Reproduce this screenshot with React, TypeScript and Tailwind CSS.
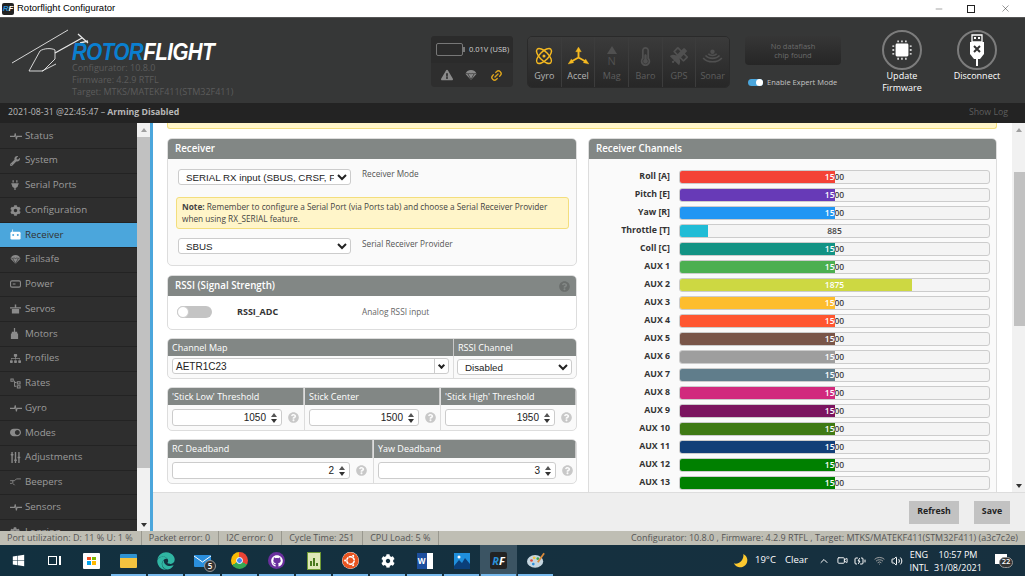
import type { ReactElement, ReactNode } from "react";
import { Atom, BatteryCharging, ChevronUp, Link2, Minus, Video, Volume2, Wifi, X } from "lucide-react";
import {
    FaCog,
    FaEdge,
    FaExclamationTriangle,
    FaGithub,
    FaPlug,
    FaQuestionCircle,
    FaSatellite,
    FaSitemap,
    FaSlidersH,
    FaThermometerHalf,
    FaToggleOn,
    FaUbuntu,
    FaWindows,
    FaWrench,
} from "react-icons/fa";

const font = "font-['Open_Sans','Noto_Sans',sans-serif]";

function Parachute({ className }: { className: string }): ReactElement {
    return (
        <svg viewBox="0 0 24 24" className={className} fill="currentColor">
            <path d="M1 10C2 5 7 2 12 2s10 3 11 8l-11 12z" />
            <path d="M6 10l6 11 6-11" stroke="#2d2d2d" strokeWidth="1.4" fill="none" />
            <path d="M1 10c2-1.500 3.500-1.500 5 0 2-1.500 4-1.500 6 0 2-1.500 4-1.500 6 0 1.500-1.500 3-1.500 5 0" stroke="#2d2d2d" strokeWidth="1.4" fill="none" />
        </svg>
    );
}

function Pulse(): ReactElement {
    return (
        <svg viewBox="0 0 16 12" className="w-[12px] h-[10px]" fill="none" stroke="currentColor" strokeWidth="1.400">
            <path d="M0 6.500h6l1-4 1.500 8 1-4H16" />
        </svg>
    );
}

function RadioIcon(): ReactElement {
    return (
        <svg viewBox="0 0 12 12" className="w-[11px] h-[11px]" fill="white">
            <path d="M2.500 0.500h.8v3h-.8z" />
            <rect x="0.500" y="3" width="11" height="8.500" rx="1.500" />
            <circle cx="3.500" cy="6.500" r="1.100" fill="#4ba6dc" />
            <circle cx="8.500" cy="6.500" r="1.100" fill="#4ba6dc" />
        </svg>
    );
}

const navItems: { label: string; icon: ReactNode }[] = [
    { label: "Status", icon: <Pulse /> },
    { label: "System", icon: <FaWrench size={10} /> },
    { label: "Serial Ports", icon: <FaPlug size={10} /> },
    { label: "Configuration", icon: <FaCog size={11} /> },
    { label: "Receiver", icon: <RadioIcon /> },
    { label: "Failsafe", icon: <Parachute className="w-[11px] h-[11px]" /> },
    {
        label: "Power",
        icon: (
            <svg viewBox="0 0 12 8" className="w-[11px] h-[8px]" fill="none" stroke="currentColor" strokeWidth="1.200">
                <rect x="0.600" y="0.600" width="10.800" height="6.800" rx="1.500" />
                <path d="M3 4h3" />
            </svg>
        ),
    },
    {
        label: "Servos",
        icon: (
            <svg viewBox="0 0 12 11" className="w-[11px] h-[10px]" fill="currentColor">
                <path d="M0 3.500h12v1.500H0zM2 5.500h8v5H2zM5.200 0.500h1.600v3H5.200z" />
            </svg>
        ),
    },
    {
        label: "Motors",
        icon: (
            <svg viewBox="0 0 10 12" className="w-[9px] h-[11px]" fill="currentColor">
                <path d="M4.300 0h1.400v4H4.300zM2 4h6v2H2zM1 6h8v6H1z" />
            </svg>
        ),
    },
    { label: "Profiles", icon: <FaSitemap size={11} /> },
    {
        label: "Rates",
        icon: (
            <svg viewBox="0 0 12 12" className="w-[11px] h-[11px]" fill="none" stroke="currentColor" strokeWidth="1.100">
                <path d="M1 1h2.500v2.500H1zM5 3v6h2M5 5h2M8 4h3v2.500H8zM8 8.500h3V11H8z" />
            </svg>
        ),
    },
    { label: "Gyro", icon: <Pulse /> },
    { label: "Modes", icon: <FaToggleOn size={11} /> },
    { label: "Adjustments", icon: <FaSlidersH size={11} className="rotate-90" /> },
    {
        label: "Beepers",
        icon: (
            <svg viewBox="0 0 12 10" className="w-[11px] h-[9px]" fill="none" stroke="currentColor" strokeWidth="1">
                <path d="M0 3h5l2-2h5M3 3v3l2 2M0 6h2" />
            </svg>
        ),
    },
    { label: "Sensors", icon: <Pulse /> },
    { label: "Logging", icon: <FaCog size={10} /> },
];

const channels: { name: string; value: number; color: string }[] = [
    { name: "Roll [A]", value: 1500, color: "bg-[#f44336]" },
    { name: "Pitch [E]", value: 1500, color: "bg-[#673ab7]" },
    { name: "Yaw [R]", value: 1500, color: "bg-[#2196f3]" },
    { name: "Throttle [T]", value: 885, color: "bg-[#20bcd6]" },
    { name: "Coll [C]", value: 1500, color: "bg-[#129384]" },
    { name: "AUX 1", value: 1500, color: "bg-[#4caf50]" },
    { name: "AUX 2", value: 1875, color: "bg-[#cdd842]" },
    { name: "AUX 3", value: 1500, color: "bg-[#fdbd2d]" },
    { name: "AUX 4", value: 1500, color: "bg-[#ff5630]" },
    { name: "AUX 5", value: 1500, color: "bg-[#795548]" },
    { name: "AUX 6", value: 1500, color: "bg-[#9e9e9e]" },
    { name: "AUX 7", value: 1500, color: "bg-[#607d8b]" },
    { name: "AUX 8", value: 1500, color: "bg-[#d12a7d]" },
    { name: "AUX 9", value: 1500, color: "bg-[#7b145f]" },
    { name: "AUX 10", value: 1500, color: "bg-[#3f7a14]" },
    { name: "AUX 11", value: 1500, color: "bg-[#123f78]" },
    { name: "AUX 12", value: 1500, color: "bg-[#008000]" },
    { name: "AUX 13", value: 1500, color: "bg-[#008000]" },
];

function TitleBar(): ReactElement {
    return (
        <div className="h-[17px] bg-white flex items-center font-['Liberation_Sans',sans-serif]">
            <div className="ml-[2px] w-[12px] h-[12px] bg-[#222] rounded-[2px] flex items-center justify-center text-[8px] leading-none font-bold italic text-white">
                <span className="text-[#2a8fd8]">R</span>F
            </div>
            <span className="ml-[3px] text-[9.500px] text-black">Rotorflight Configurator</span>
            <div className="ml-auto flex items-center text-[#222]">
                <Minus size={10} strokeWidth={1} className="mr-[23px]" />
                <div className="w-[8px] h-[8px] border border-[#222] mr-[25px]" />
                <X size={11} strokeWidth={1} className="mr-[14px]" />
            </div>
        </div>
    );
}

function Logo(): ReactElement {
    return (
        <div className="relative w-[431px] pl-[72px] pt-[24px]">
            <svg viewBox="0 0 100 80" className="absolute left-0 top-0 w-[100px] h-[80px]" fill="none" stroke="#e8e8e8" strokeWidth="0.900">
                <path d="M12 45L68 12" />
                <path d="M55 35L82 20M78 16L88 25M80 25L88 23" strokeWidth="1.300" />
                <path d="M29 53L40 33C44 30 52 30 55 32L55 41L43 53z" />
                <path d="M42 53L56 46" />
            </svg>
            <div className="h-[20px] text-[20.500px] leading-[20px] font-black italic font-['Liberation_Sans',sans-serif] tracking-[-0.500px] scale-y-[1.150]">
                <span className="text-[#0a7fd0]">ROTOR</span>
                <span className="text-white">FLIGHT</span>
            </div>
            <div className="text-[9px] leading-[12px] text-[#5c5c5c]">
                <div>Configurator: 10.8.0</div>
                <div>Firmware: 4.2.9 RTFL</div>
                <div>Target: MTKS/MATEKF411(STM32F411)</div>
            </div>
        </div>
    );
}

function BatteryPanel(): ReactElement {
    return (
        <div className="w-[82px] h-[51px] mt-[18px] rounded-[4px] bg-[#2e2e2e] flex flex-col">
            <div className="h-[27px] flex items-center pl-[5px] bg-[#2b2b2b] rounded-t-[4px]">
                <div className="w-[27px] h-[13px] border border-[#777] rounded-[2px]" />
                <div className="w-[2px] h-[5px] bg-[#777]" />
                <span className="ml-[4px] text-[7.500px] text-[#d0d0d0]">0.01V (USB)</span>
            </div>
            <div className="flex-1 flex items-center justify-around px-[4px] text-[#8a8a8a]">
                <FaExclamationTriangle size={12} />
                <Parachute className="w-[12px] h-[12px]" />
                <Link2 size={13} strokeWidth={2.500} className="text-[#d9a11c] -rotate-45" />
            </div>
        </div>
    );
}

function SensorCell({ label, active, children }: { label: string; active?: boolean; children: ReactNode }): ReactElement {
    return (
        <div className={`flex-1 flex flex-col items-center border-r border-[#3c3c3c] last:border-r-0 bg-gradient-to-b from-[#3b3b3b] to-[#272727] ${active ? "text-[#f5b921]" : "text-[#505050]"}`}>
            <div className="h-[28px] mt-[5px] flex items-center justify-center">{children}</div>
            <span className={`text-[9px] leading-[12px] ${active ? "text-[#b4b4b4]" : "text-[#5e5e5e]"}`}>{label}</span>
        </div>
    );
}

function SensorPanel(): ReactElement {
    return (
        <div className="w-[203px] h-[52px] ml-[14px] mt-[18px] rounded-[5px] overflow-hidden flex border border-[#2a2a2a]">
            <SensorCell label="Gyro" active>
                <Atom size={20} strokeWidth={1.700} />
            </SensorCell>
            <SensorCell label="Accel" active>
                <svg viewBox="0 0 22 20" className="w-[21px] h-[19px]" fill="currentColor" stroke="currentColor">
                    <path d="M11 11V4M11 11L4 15M11 11l7 4" strokeWidth="2" fill="none" />
                    <path d="M11 0l3 5H8zM0 18l3.500-5.500 2.500 4zM22 18l-3.500-5.500-2.500 4z" strokeWidth="0.300" />
                </svg>
            </SensorCell>
            <SensorCell label="Mag">
                <div className="flex flex-col items-center leading-none">
                    <div className="w-0 h-0 border-x-[5px] border-x-transparent border-b-[8px] border-b-current" />
                    <span className="text-[11px] leading-[13px]">N</span>
                </div>
            </SensorCell>
            <SensorCell label="Baro">
                <FaThermometerHalf size={19} />
            </SensorCell>
            <SensorCell label="GPS">
                <FaSatellite size={18} />
            </SensorCell>
            <SensorCell label="Sonar">
                <svg viewBox="0 0 22 16" className="w-[21px] h-[15px]" fill="none" stroke="currentColor" strokeWidth="1.700">
                    <circle cx="11" cy="3" r="1.500" fill="currentColor" />
                    <path d="M6.500 5c2 2.500 7 2.500 9 0M3.500 7c3.500 4 11.500 4 15 0M1 9.500c4.500 5.500 15.500 5.500 20 0" />
                </svg>
            </SensorCell>
        </div>
    );
}

function ExpertBlock(): ReactElement {
    return (
        <div className="w-[96px] ml-[15px] mt-[18px] flex flex-col">
            <div className="h-[29px] rounded-[4px] bg-gradient-to-b from-[#363636] to-[#262626] flex items-center justify-center text-center text-[7.500px] leading-[9px] text-[#6b6b6b]">
                No dataflash
                <br />
                chip found
            </div>
            <div className="mt-[12px] ml-[3px] flex items-center">
                <div className="w-[15px] h-[7px] rounded-full bg-[#4ba6dc] flex justify-end items-center">
                    <div className="w-[7px] h-[7px] rounded-full bg-white" />
                </div>
                <span className="ml-[4px] text-[7.500px] text-[#c4c4c4] whitespace-nowrap">Enable Expert Mode</span>
            </div>
        </div>
    );
}

function CircleButton({ label, children, className }: { label: ReactNode; children: ReactNode; className: string }): ReactElement {
    return (
        <div className={`w-[60px] pt-[12px] flex flex-col items-center ${className}`}>
            <div className="w-[40px] h-[40px] rounded-full border-2 border-[#7c7c7c] flex items-center justify-center">{children}</div>
            <div className="text-center text-[9px] leading-[12px] text-white whitespace-nowrap">{label}</div>
        </div>
    );
}

function Header(): ReactElement {
    return (
        <div className={`h-[86px] bg-[#363737] border-t border-[#555] flex ${font}`}>
            <Logo />
            <BatteryPanel />
            <SensorPanel />
            <ExpertBlock />
            <CircleButton className="ml-[31px]" label={<>Update<br />Firmware</>}>
                <svg viewBox="0 0 24 24" className="w-[22px] h-[22px]" fill="white">
                    <rect x="5" y="5" width="14" height="14" rx="1.500" />
                    <path d="M7 1.500h1.500v2H7zM11.200 1.500h1.500v2h-1.500zM15.500 1.500H17v2h-1.500zM7 20.500h1.500v2H7zM11.200 20.500h1.500v2h-1.500zM15.500 20.500H17v2h-1.500zM1.500 7h2v1.500h-2zM1.500 11.200h2v1.500h-2zM1.500 15.500h2V17h-2zM20.500 7h2v1.500h-2zM20.500 11.200h2v1.500h-2zM20.500 15.500h2V17h-2z" />
                </svg>
            </CircleButton>
            <CircleButton className="ml-[15px]" label="Disconnect">
                <svg viewBox="0 0 20 34" className="w-[20px] h-[34px]" fill="white">
                    <path d="M5 2h10v7H5z" fill="none" stroke="white" strokeWidth="1.300" />
                    <path d="M7 4h2v2H7zM11 4h2v2h-2z" />
                    <path d="M3 9h14v12l-4 5H7l-4-5z" />
                    <path d="M9 26h2v7H9z" />
                    <path d="M7 13l6 6M13 13l-6 6" stroke="#333" strokeWidth="2" />
                </svg>
            </CircleButton>
        </div>
    );
}

function LogBar(): ReactElement {
    return (
        <div className={`h-[20px] bg-[#232323] flex items-center justify-between pl-[8px] pr-[17px] text-[8.750px] ${font}`}>
            <span className="text-[#b8b8b8]">
                2021-08-31 @22:45:47 – <b>Arming Disabled</b>
            </span>
            <span className="text-[#5e5e5e]">Show Log</span>
        </div>
    );
}

function Sidebar(): ReactElement {
    return (
        <div className={`w-[137px] pt-[1px] bg-[#2e2e2e] overflow-hidden ${font}`}>
            {navItems.map((item) => (
                <div
                    key={item.label}
                    className={`h-[24.750px] flex items-center border-b border-[#232323] shrink-0 ${item.label === "Receiver" ? "bg-[#4ba6dc] text-[#333]" : "text-[#9c9c9c]"}`}
                >
                    <div className={`w-[25px] pl-[10px] flex ${item.label === "Receiver" ? "text-white" : "text-[#8a8a8a]"}`}>{item.icon}</div>
                    <span className="text-[9.750px]">{item.label}</span>
                </div>
            ))}
        </div>
    );
}

function ScrollBar({ thumbTop, thumbHeight, className }: { thumbTop: string; thumbHeight: string; className: string }): ReactElement {
    return (
        <div className={`bg-[#f1f1f1] flex flex-col shrink-0 ${className}`}>
            <div className="h-[14px] flex items-center justify-center">
                <div className="w-0 h-0 border-x-[3px] border-x-transparent border-b-[4px] border-b-[#a0a0a0]" />
            </div>
            <div className={`bg-[#c1c1c1] ${thumbTop} ${thumbHeight}`} />
            <div className="mt-auto h-[13px] flex items-center justify-center">
                <div className="w-0 h-0 border-x-[3px] border-x-transparent border-t-[4px] border-t-[#333]" />
            </div>
        </div>
    );
}

function Help({ dark }: { dark?: boolean }): ReactElement {
    return <FaQuestionCircle size={11} className={dark ? "text-[#6a6e6c]" : "text-[#c8c8c8]"} />;
}

function NumberBox({ value, width }: { value: number; width: string }): ReactElement {
    return (
        <div className={`h-[17px] bg-white border border-[#ccc] rounded-[3px] flex items-center font-['Liberation_Sans',sans-serif] text-[10px] text-[#222] ${width}`}>
            <span className="flex-1 text-right">{value}</span>
            <div className="w-[15px] flex flex-col items-center gap-[2px]">
                <div className="w-0 h-0 border-x-[3px] border-x-transparent border-b-[4px] border-b-[#555]" />
                <div className="w-0 h-0 border-x-[3px] border-x-transparent border-t-[4px] border-t-[#333]" />
            </div>
        </div>
    );
}

function SelectBox({ value, className }: { value: string; className: string }): ReactElement {
    return (
        <select defaultValue={value} className={`h-[16px] pl-[3px] bg-white border border-[#ccc] rounded-[3px] font-['Liberation_Sans',sans-serif] text-[9.750px] text-[#222] ${className}`}>
            <option value={value}>{value}</option>
        </select>
    );
}

function PanelHead({ children, help }: { children: ReactNode; help?: boolean }): ReactElement {
    return (
        <div className="h-[20px] bg-[#828785] rounded-t-[4px] flex items-center justify-between pl-[7px] pr-[6px] text-[9.750px] font-semibold text-white">
            {children}
            {help && <Help dark />}
        </div>
    );
}

function GridHead({ children, className }: { children: ReactNode; className: string }): ReactElement {
    return (
        <div className={`bg-[#828785] flex items-center pl-[4px] text-[9px] font-medium text-white border-r border-[#c8c8c8] last:border-r-0 ${className}`}>{children}</div>
    );
}

function ReceiverPanel(): ReactElement {
    return (
        <div className="h-[128px] border border-[#ddd] rounded-[5px] bg-[#fafafa]">
            <PanelHead>Receiver</PanelHead>
            <div className="pl-[10px] pr-[7px] pt-[10px]">
                <div className="flex items-start">
                    <SelectBox value="SERIAL RX input (SBUS, CRSF, FPORT, SUMD)" className="w-[173px]" />
                    <span className="ml-[11px] -mt-[1px] text-[8.250px] text-[#555]">Receiver Mode</span>
                </div>
                <div className="mt-[12px] -ml-[2px] h-[32px] bg-[#fff5c9] border border-[#f3de7d] rounded-[3px] px-[5px] py-[3px] text-[8.250px] leading-[11.500px] text-[#444]">
                    <b>Note:</b> Remember to configure a Serial Port (via Ports tab) and choose a Serial Receiver Provider when using RX_SERIAL feature.
                </div>
                <div className="mt-[9px] flex items-start">
                    <SelectBox value="SBUS" className="w-[173px]" />
                    <span className="ml-[11px] text-[8.250px] text-[#555]">Serial Receiver Provider</span>
                </div>
            </div>
        </div>
    );
}

function RssiPanel(): ReactElement {
    return (
        <div className="h-[55px] mt-[9px] border border-[#ddd] rounded-[5px] bg-white">
            <PanelHead help>RSSI (Signal Strength)</PanelHead>
            <div className="flex items-center h-[33px] pl-[9px] pb-[1px]">
                <div className="w-[35px] h-[12px] rounded-full bg-[#c4c4c4] flex items-center">
                    <div className="w-[12px] h-[12px] rounded-full bg-white border border-[#ccc]" />
                </div>
                <span className="ml-[25px] w-[125px] text-[9px] font-bold text-[#333]">RSSI_ADC</span>
                <span className="text-[8.250px] text-[#666]">Analog RSSI input</span>
            </div>
        </div>
    );
}

function ChannelMapTable(): ReactElement {
    return (
        <div className="h-[41px] mt-[8px] border border-[#ddd] rounded-[5px] bg-[#fafafa] overflow-hidden">
            <div className="flex h-[17px]">
                <GridHead className="w-[286px]">Channel Map</GridHead>
                <GridHead className="flex-1">RSSI Channel</GridHead>
            </div>
            <div className="flex h-[23px]">
                <div className="w-[286px] pl-[4px] pt-[2px] border-r border-[#ddd]">
                    <div className="w-[277px] h-[16px] bg-white border border-[#ccc] rounded-[3px] flex items-center font-['Liberation_Sans',sans-serif] text-[10px] text-[#222]">
                        <span className="flex-1 pl-[3px]">AETR1C23</span>
                        <div className="w-[14px] h-full border-l border-[#ccc] flex items-center justify-center">
                            <div className="w-[5px] h-[5px] border-r-2 border-b-2 border-[#222] rotate-45 -mt-[2px]" />
                        </div>
                    </div>
                </div>
                <div className="flex-1 pl-[3px] pt-[3px] flex items-start">
                    <SelectBox value="Disabled" className="w-[115px]" />
                </div>
            </div>
        </div>
    );
}

function ThresholdTable(): ReactElement {
    const cells = [
        { label: "'Stick Low' Threshold", value: 1050, w: "w-[137px]" },
        { label: "Stick Center", value: 1500, w: "w-[136px]" },
        { label: "'Stick High' Threshold", value: 1950, w: "flex-1" },
    ];
    return (
        <div className="h-[44px] mt-[8px] border border-[#ddd] rounded-[5px] bg-[#fafafa] overflow-hidden flex">
            {cells.map((cell) => (
                <div key={cell.label} className={`${cell.w} border-r border-[#ddd] last:border-r-0 flex flex-col`}>
                    <GridHead className="h-[17px]">{cell.label}</GridHead>
                    <div className="flex-1 flex items-center pl-[4px]">
                        <NumberBox value={cell.value} width="w-[110px]" />
                        <div className="ml-[6px] flex"><Help /></div>
                    </div>
                </div>
            ))}
        </div>
    );
}

function DeadbandTable(): ReactElement {
    const cells = [
        { label: "RC Deadband", value: 2, w: "w-[206px]" },
        { label: "Yaw Deadband", value: 3, w: "flex-1" },
    ];
    return (
        <div className="h-[45px] mt-[8px] border border-[#ddd] rounded-[5px] bg-[#fafafa] overflow-hidden flex">
            {cells.map((cell) => (
                <div key={cell.label} className={`${cell.w} border-r border-[#ddd] last:border-r-0 flex flex-col`}>
                    <GridHead className="h-[18px]">{cell.label}</GridHead>
                    <div className="flex-1 flex items-center pl-[4px]">
                        <NumberBox value={cell.value} width="w-[178px]" />
                        <div className="ml-[6px] flex"><Help /></div>
                    </div>
                </div>
            ))}
        </div>
    );
}

function ChannelRow({ name, value, color }: { name: string; value: number; color: string }): ReactElement {
    return (
        <div className="h-[18px] flex items-center">
            <div className="w-[80px] text-right text-[8.750px] font-bold text-[#333]">{name}</div>
            <div className="relative ml-[9px] w-[311px] h-[14px] bg-[#f4f4f4] border border-[#ccc] rounded-[3px] overflow-hidden text-[8.500px] leading-[12px] font-semibold text-center text-[#444]">
                {value}
                {/* white copy of the value, clipped by the coloured fill */}
                <div className={`absolute left-0 top-0 h-full overflow-hidden ${color}`} style={{ width: `${(value - 750) / 15}%` }}>
                    <div className="w-[309px] text-white">{value}</div>
                </div>
            </div>
        </div>
    );
}

function ChannelsPanel(): ReactElement {
    return (
        <div className="h-[400px] border border-[#ddd] rounded-[5px] bg-[#fafafa]">
            <PanelHead>Receiver Channels</PanelHead>
            <div className="pt-[9px] pl-[1px]">
                {channels.map((channel) => (
                    <ChannelRow key={channel.name} {...channel} />
                ))}
            </div>
        </div>
    );
}

function Content(): ReactElement {
    return (
        <div className={`flex-1 min-w-0 flex flex-col ${font}`}>
            <div className="h-[369px] flex overflow-hidden">
                <div className="flex-1 min-w-0 bg-white pl-[14px] pr-[15px] overflow-hidden">
                    <div className="h-[6px] bg-[#fff5c9] border-b border-x border-[#f3de7d] rounded-b-[3px]" />
                    <div className="mt-[9px] flex gap-[11px]">
                        <div className="w-[410px]">
                            <ReceiverPanel />
                            <RssiPanel />
                            <ChannelMapTable />
                            <ThresholdTable />
                            <DeadbandTable />
                            <div className="h-[20px] mt-[8px] bg-[#828785] rounded-t-[4px]" />
                        </div>
                        <div className="flex-1 min-w-0">
                            <ChannelsPanel />
                        </div>
                    </div>
                </div>
                <ScrollBar className="w-[13px]" thumbTop="mt-[35px]" thumbHeight="h-[154px] ml-[2px]" />
            </div>
            <div className="h-[39px] bg-[#eeeeee] border-t border-[#ddd] flex items-center justify-end pr-[15px] gap-[15px]">
                <div className="h-[23px] w-[50px] bg-[#c2c2c2] flex items-center justify-center text-[8.750px] font-bold text-[#222]">Refresh</div>
                <div className="h-[23px] w-[36px] bg-[#c2c2c2] flex items-center justify-center text-[8.750px] font-bold text-[#222]">Save</div>
            </div>
        </div>
    );
}

function StatusBar(): ReactElement {
    const stats = ["Port utilization: D: 11 % U: 1 %", "Packet error: 0", "I2C error: 0", "Cycle Time: 251", "CPU Load: 5 %"];
    return (
        <div className={`h-[14px] bg-[#bfbeb4] flex items-center text-[9px] text-[#555] ${font}`}>
            {stats.map((stat) => (
                <span key={stat} className="h-full flex items-center pl-[7px] pr-[8px] border-r border-[#99988f] last:border-r-0">{stat}</span>
            ))}
            <span className="ml-auto pr-[7px]">Configurator: 10.8.0 , Firmware: 4.2.9 RTFL , Target: MTKS/MATEKF411(STM32F411) (a3c7c2e)</span>
        </div>
    );
}

function TaskIcon({ children, running, active }: { children: ReactNode; running?: boolean; active?: boolean }): ReactElement {
    return (
        <div className={`relative w-[37px] h-full flex items-center justify-center ${active ? "bg-[#3b5463]" : ""}`}>
            {children}
            {running && <div className="absolute bottom-0 left-[1px] right-[1px] h-[2px] bg-[#76b9ed]" />}
        </div>
    );
}

function Taskbar(): ReactElement {
    return (
        <div className={`h-[31px] bg-gradient-to-r from-[#12303f] to-[#17303f] flex items-center text-white ${font}`}>
            <div className="w-[36px] h-full flex items-center justify-center">
                <FaWindows size={13} />
            </div>
            <div className="w-[37px] h-full flex items-center justify-center">
                <div className="w-[9px] h-[9px] border border-white" />
                <div className="ml-[2px] w-[2px] h-[9px] bg-white" />
            </div>
            <TaskIcon>
                <div className="w-[17px] h-[16px] bg-white rounded-[1px] grid grid-cols-2 gap-[1px] p-[4px]">
                    <div className="bg-[#f25022]" />
                    <div className="bg-[#7fba00]" />
                    <div className="bg-[#00a4ef]" />
                    <div className="bg-[#ffb900]" />
                </div>
            </TaskIcon>
            <TaskIcon running>
                <div className="w-[17px] h-[14px] bg-[#f3c33f] border-t-[4px] border-[#2f93d1] rounded-[1px]" />
            </TaskIcon>
            <TaskIcon running>
                <FaEdge size={18} className="text-[#30b6a4]" />
            </TaskIcon>
            <TaskIcon running>
                <div className="relative w-[17px] h-[12px] bg-[#2a8fdc] rounded-[1px]">
                    <svg viewBox="0 0 17 12" className="w-[17px] h-[12px]" fill="none" stroke="white" strokeWidth="1">
                        <path d="M0 1l8.500 6L17 1" />
                    </svg>
                    <div className="absolute -right-[5px] -bottom-[5px] w-[12px] h-[12px] rounded-full bg-[#333] border border-[#999] flex items-center justify-center text-[8px] leading-none font-semibold">5</div>
                </div>
            </TaskIcon>
            <TaskIcon running>
                <div className="w-[17px] h-[17px] rounded-full bg-[conic-gradient(#ea4335_0_33%,#34a853_33%_66%,#fbbc04_66%_100%)] flex items-center justify-center">
                    <div className="w-[7px] h-[7px] rounded-full bg-[#4285f4] border border-white" />
                </div>
            </TaskIcon>
            <TaskIcon running>
                <div className="w-[17px] h-[17px] rounded-full bg-[#6a2f9e] flex items-center justify-center">
                    <FaGithub size={12} />
                </div>
            </TaskIcon>
            <TaskIcon running>
                <div className="w-[14px] h-[18px] bg-[#dfe8b8] border border-[#6f9a35] flex items-end justify-center pb-[3px] gap-[1px]">
                    <div className="w-[2px] h-[5px] bg-[#4a7a1f]" />
                    <div className="w-[2px] h-[8px] bg-[#4a7a1f]" />
                    <div className="w-[2px] h-[3px] bg-[#4a7a1f]" />
                </div>
            </TaskIcon>
            <TaskIcon running>
                <FaUbuntu size={17} className="text-[#e95420] bg-white rounded-full" />
            </TaskIcon>
            <TaskIcon running>
                <FaCog size={14} />
            </TaskIcon>
            <TaskIcon running>
                <div className="w-[16px] h-[16px] bg-white flex">
                    <div className="w-[10px] h-full bg-[#1d4f9e] text-[8px] leading-[16px] text-center font-bold">W</div>
                </div>
            </TaskIcon>
            <TaskIcon running>
                <svg viewBox="0 0 16 16" className="w-[16px] h-[16px]">
                    <rect width="16" height="16" fill="#1f8fdc" />
                    <path d="M0 13l5-6 3 3 3-5 5 6v5H0z" fill="#0b3f7a" />
                    <circle cx="5" cy="4" r="1.500" fill="white" />
                </svg>
            </TaskIcon>
            <TaskIcon running active>
                <div className="w-[17px] h-[17px] bg-[#222] rounded-[2px] flex items-center justify-center text-[11px] leading-none font-bold italic">
                    <span className="text-[#2a8fd8]">R</span>F
                </div>
            </TaskIcon>
            <TaskIcon running>
                <svg viewBox="0 0 20 18" className="w-[18px] h-[17px]">
                    <ellipse cx="9" cy="10" rx="9" ry="7" fill="#c5d6e0" />
                    <circle cx="5" cy="9" r="1.500" fill="#e04b3a" />
                    <circle cx="8" cy="6" r="1.500" fill="#f3c33f" />
                    <circle cx="12" cy="7" r="1.500" fill="#3aa655" />
                    <circle cx="7" cy="13" r="1.500" fill="#2a8fdc" />
                    <path d="M12 11L19 1" stroke="#d98a3a" strokeWidth="2" />
                </svg>
            </TaskIcon>
            <div className="ml-auto flex items-center h-full">
                <svg viewBox="0 0 16 16" className="w-[15px] h-[15px] mr-[7px]" fill="#fdc92f">
                    <path d="M11 1A7.500 7.500 0 1 1 1 11C6 13 12 7 11 1z" />
                </svg>
                <span className="text-[9.500px] w-[30px]">19°C</span>
                <span className="text-[9.500px] w-[27px]">Clear</span>
                <ChevronUp size={12} className="ml-[6px] mr-[7px]" />
                <Video size={11} className="mr-[6px]" />
                <BatteryCharging size={12} className="mr-[8px]" />
                <Wifi size={11} className="mr-[6px] text-[#aaa]" />
                <Volume2 size={12} className="mr-[3px]" />
                <div className="w-[26px] text-center text-[9px] leading-[13px]">ENG<br />INTL</div>
                <div className="w-[52px] text-center text-[9px] leading-[13px]">10:57 PM<br />31/08/2021</div>
                <div className="relative w-[25px] ml-[11px] mr-[5px] h-[14px]">
                    <div className="w-[12px] h-[10px] bg-white" />
                    <div className="absolute left-[4px] top-[3px] w-[14px] h-[11px] rounded-full bg-[#333] border border-[#999] flex items-center justify-center text-[7.500px] leading-none font-semibold">22</div>
                </div>
            </div>
        </div>
    );
}

export default function App(): ReactElement {
    return (
        <div className="w-[1025px] h-[576px] flex flex-col overflow-hidden bg-white">
            <TitleBar />
            <Header />
            <LogBar />
            <div className="h-[408px] flex overflow-hidden">
                <Sidebar />
                <ScrollBar className="w-[13px]" thumbTop="mt-0" thumbHeight="h-[331px]" />
                <div className="w-[3px] bg-[#4ba6dc]" />
                <Content />
            </div>
            <StatusBar />
            <Taskbar />
        </div>
    );
}
